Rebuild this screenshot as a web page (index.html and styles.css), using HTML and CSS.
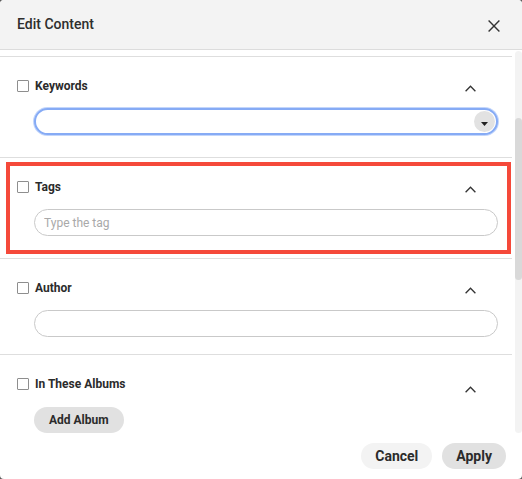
FILE: index.html
```html
<!DOCTYPE html>
<html lang="en">
<head>
<meta charset="utf-8">
<title>Edit Content</title>
<link rel="stylesheet" href="styles.css">
</head>
<body>
<div class="dialog">
  <header class="dlg-head">
    <h1 class="dlg-title">Edit Content</h1>
    <button class="close" aria-label="Close">
      <svg width="12" height="12" viewBox="0 0 12 12"><path d="M0.6 0.6 L11.4 11.4 M11.4 0.6 L0.6 11.4" stroke="#333" stroke-width="1.4" fill="none"/></svg>
    </button>
  </header>
  <div class="dlg-body">
    <div class="scroll">
      <div class="list">
        <section class="field">
          <div class="row">
            <span class="check"></span>
            <span class="label">Keywords</span>
            <svg class="chev" width="11" height="7" viewBox="0 0 11 7"><path d="M0.6 6.2 L5.5 1.2 L10.4 6.2" stroke="#333" stroke-width="1.3" fill="none"/></svg>
          </div>
          <div class="pill pill--focus">
            <input class="pill-input" type="text" aria-label="Keywords">
            <span class="drop"><svg width="7" height="4" viewBox="0 0 7 4"><path d="M0 0 H7 L3.5 4 Z" fill="#222"/></svg></span>
          </div>
        </section>
        <section class="field field--marked">
          <div class="annot"></div>
          <div class="row">
            <span class="check"></span>
            <span class="label">Tags</span>
            <svg class="chev" width="11" height="7" viewBox="0 0 11 7"><path d="M0.6 6.2 L5.5 1.2 L10.4 6.2" stroke="#333" stroke-width="1.3" fill="none"/></svg>
          </div>
          <div class="pill">
            <input class="pill-input" type="text" placeholder="Type the tag">
          </div>
        </section>
        <section class="field field--short">
          <div class="row">
            <span class="check"></span>
            <span class="label">Author</span>
            <svg class="chev" width="11" height="7" viewBox="0 0 11 7"><path d="M0.6 6.2 L5.5 1.2 L10.4 6.2" stroke="#333" stroke-width="1.3" fill="none"/></svg>
          </div>
          <div class="pill">
            <input class="pill-input" type="text" aria-label="Author">
          </div>
        </section>
        <section class="field field--open">
          <div class="row">
            <span class="check"></span>
            <span class="label">In These Albums</span>
            <svg class="chev chev--low" width="11" height="7" viewBox="0 0 11 7"><path d="M0.6 6.2 L5.5 1.2 L10.4 6.2" stroke="#333" stroke-width="1.3" fill="none"/></svg>
          </div>
          <button class="add-btn">Add Album</button>
        </section>
      </div>
    </div>
    <div class="scrollbar"><div class="thumb"></div></div>
  </div>
  <footer class="dlg-foot">
    <button class="btn btn--cancel">Cancel</button>
    <button class="btn btn--apply">Apply</button>
  </footer>
</div>
</body>
</html>
```

FILE: styles.css
```css
* { box-sizing: border-box; }

html, body {
  margin: 0;
  padding: 0;
  background: #5a5a5a;
}

body {
  font-family: Roboto, "Liberation Sans", Arial, sans-serif;
  color: #2b2b2b;
}

.dialog {
  width: 522px;
  height: 479px;
  background: #fff;
  border-radius: 4px;
  overflow: hidden;
  display: flex;
  flex-direction: column;
}

.dlg-head {
  height: 50px;
  flex: none;
  background: #f3f3f3;
  border-bottom: 1px solid #dcdcdc;
  display: flex;
  align-items: center;
  padding: 0 22px 0 17px;
}

.dlg-title {
  margin: 0;
  font-size: 14px;
  font-weight: 500;
  color: #2e2e2e;
  flex: 1;
  position: relative;
  top: -1px;
}

.close {
  border: 0;
  background: none;
  padding: 0;
  width: 12px;
  height: 12px;
  display: block;
  position: relative;
  top: 1px;
}
.close svg { display: block; }

.dlg-body {
  height: 383px;
  flex: none;
  display: flex;
}

.scroll {
  width: 512px;
  height: 383px;
  overflow: hidden;
  padding-top: 6px;
}

.list {
  border-top: 1px solid #dedede;
  width: 514px;
}

.field {
  width: 512px;
  padding: 21px 14px 22px 17px;
  border-bottom: 1px solid #dedede;
}
.field--short { padding-bottom: 17px; }
.field--open { border-bottom: 0; }
.field--marked { position: relative; }

.annot {
  position: absolute;
  top: 4px;
  left: 6px;
  width: 505px;
  height: 92px;
  border: 4px solid #f5493a;
  pointer-events: none;
}

.row {
  display: flex;
  align-items: center;
  height: 16px;
}

.check {
  width: 12px;
  height: 12px;
  border: 1px solid #8e8e8e;
  border-radius: 1px;
  background: #fff;
  flex: none;
}

.label {
  margin-left: 6px;
  font-size: 12px;
  font-weight: 700;
  color: #2b2b2b;
  line-height: 16px;
}

.chev {
  margin-left: auto;
  margin-right: 22px;
  align-self: flex-start;
  margin-top: 7px;
  display: block;
}
.chev--low { margin-top: 10px; }

.pill {
  margin: 14px 0 0 17px;
  height: 27px;
  border: 1px solid #c9c9c9;
  border-radius: 14px;
  display: flex;
  align-items: center;
  padding: 0 2px 0 9px;
  background: #fff;
}

.pill--focus {
  border: 2px solid #86abf5;
  box-shadow: 0 0 0 1px #c3d6fb;
  padding: 0 1px 0 8px;
}

.pill-input {
  flex: 1;
  min-width: 0;
  border: 0;
  outline: none;
  background: transparent;
  padding: 0;
  font-family: Roboto, "Liberation Sans", Arial, sans-serif;
  font-size: 12px;
  color: #333;
}
.pill-input::placeholder { color: #a9a9a9; }

.drop {
  width: 21px;
  height: 21px;
  border-radius: 50%;
  background: #e2e2e2;
  display: flex;
  align-items: center;
  justify-content: center;
  padding-top: 4px;
  flex: none;
}
.drop svg { display: block; }

.add-btn {
  margin: 15px 0 0 17px;
  height: 26px;
  padding: 0 15px;
  border: 0;
  border-radius: 13px;
  background: #e1e1e1;
  font-family: Roboto, "Liberation Sans", Arial, sans-serif;
  font-size: 12px;
  font-weight: 700;
  color: #2b2b2b;
}

.scrollbar {
  flex: none;
  width: 7px;
  height: 382px;
  margin: 1px 0 0 3px;
  background: #f3f3f3;
  border-radius: 4px;
}

.thumb {
  width: 7px;
  height: 162px;
  margin-top: 67px;
  background: #d9d9d9;
  border-radius: 4px;
}

.dlg-foot {
  flex: 1;
  display: flex;
  justify-content: flex-end;
  align-items: flex-start;
  gap: 10px;
  padding: 10px 16px 0 0;
}

.btn {
  height: 26px;
  padding: 0 14px;
  border: 0;
  border-radius: 13px;
  font-family: Roboto, "Liberation Sans", Arial, sans-serif;
  font-size: 14px;
  font-weight: 700;
  color: #2b2b2b;
}
.btn--cancel { background: #f3f3f3; }
.btn--apply { background: #e1e1e1; }
```
